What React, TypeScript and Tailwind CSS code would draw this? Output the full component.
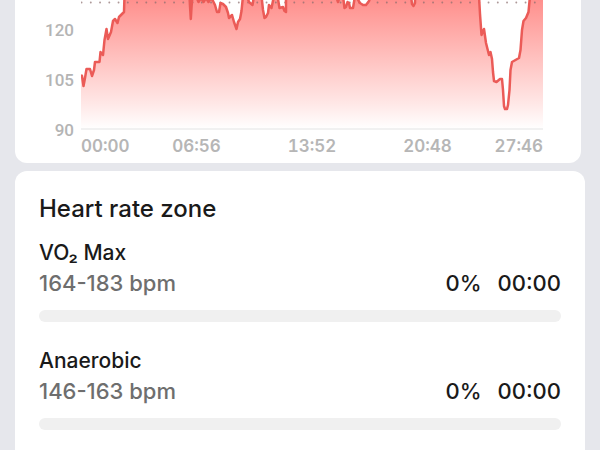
import React from "react";

const yTicks = ["120", "105", "90"];

const zones = [
  { id: "vo2", name: "VO₂ Max", range: "164-183 bpm", percent: 0, time: "00:00" },
  { id: "anaerobic", name: "Anaerobic", range: "146-163 bpm", percent: 0, time: "00:00" },
];

// bpm samples, the peaks run off above the visible part
const line =
  "M81 75 L82 76 L83.5 86 L85 78 L86.5 69 L90 69 L92 76 L94 70 L95 62 L99.5 62 L100.5 52 L103 55 L104.5 40 L106.5 29 L108 39 L111 32 L113 21 L115 19 L117.5 23 L119 17 L124 12 L124.5 -4 " +
  "L189.5 -4 L190 6 L190.8 19 L191.6 6 L192.5 -4 L196 -4 L198.5 2 L201 -2 L203.5 2 L206 -2 L208.5 2 L211 -2 L213 1 L215 5 L217 12 L219 12 L220.5 3 L223 4 L226 7 L228 13 L229 18 L232 15 L234 22 L236.5 29 L238 22 L240 19 L241.5 11 L243 -4 " +
  "L247 -4 L249 2 L252.5 5 L254 -4 L261.5 -4 L263 10 L264.5 18 L266 17 L268 13 L269 5 L271.5 8 L274 -4 L277.5 -4 L279.5 8 L283 7 L284.5 11 L286 12 L286 -4 " +
  "L336 -4 L338 2 L340 -4 L343 -4 L344.5 8 L346 7 L347.5 2 L349 3 L350 8 L353 8 L355 -4 L357 -2 L360 3 L363 5 L366 5 L369 1 L371 -4 L411 -4 L412 4 L413.5 6 L415 3 L415 -4 " +
  "L479 -4 L480 14 L481.5 35 L484 29 L486 43 L488 51 L489 55 L490.5 52 L492 59 L493 72 L494 81 L496.5 82 L500 79 L502 79 L503 90 L504 106 L505 109 L507 109 L508 105 L509.5 90 L510.5 70 L512 62 L519 58 L520.5 50 L522 30 L523.5 21 L526 18 L528.5 12 L530 -4 L543 -4";

function HeartRateChart() {
  return (
    <section className="mr-1 rounded-b-xl bg-white pr-[38px] pb-1.5 pl-6">
      <div className="flex h-[130px]">
        <div className="flex w-[42px] shrink-0 flex-col gap-[26px] pt-[18px] pr-[7px] text-right font-[Roboto,sans-serif] text-[17px] leading-6 font-medium text-[#b4b4b4]">
          {yTicks.map((tick) => (
            <span key={tick}>{tick}</span>
          ))}
        </div>
        <svg
          className="block h-full min-w-0 flex-1"
          viewBox="81 0 462 130"
          preserveAspectRatio="none"
          role="img"
          aria-label="Heart rate"
        >
          <defs>
            <linearGradient id="hr-fill" gradientUnits="userSpaceOnUse" x1="0" y1="0" x2="0" y2="129">
              <stop offset="0" stopColor="#ff908d" />
              <stop offset="0.45" stopColor="#ffc1bf" />
              <stop offset="0.8" stopColor="#ffe7e6" />
              <stop offset="1" stopColor="#ffffff" />
            </linearGradient>
          </defs>
          <path d={`${line} L543 129 L81 129 Z`} fill="url(#hr-fill)" />
          <path d="M81 129 H543" stroke="#f1f1f1" strokeWidth="2" />
          <path
            d="M81.5 2.5 H543"
            stroke="#8a6c6c"
            strokeOpacity="0.7"
            strokeWidth="1.8"
            strokeLinecap="round"
            strokeDasharray="0.1 9.15"
          />
          <path
            d={line}
            fill="none"
            stroke="#eb5b57"
            strokeWidth="2.5"
            strokeLinejoin="round"
            vectorEffect="non-scaling-stroke"
          />
        </svg>
      </div>
      <div className="ml-[42px] grid grid-cols-8 pt-1.5 text-[17px] leading-[21px] font-semibold text-[#b6b6b6] tabular-nums">
        <span>00:00</span>
        <span className="col-span-2 text-center">06:56</span>
        <span className="col-span-2 text-center">13:52</span>
        <span className="col-span-2 text-center">20:48</span>
        <span className="flex justify-end">27:46</span>
      </div>
    </section>
  );
}

export default function App() {
  return (
    <main className="h-screen overflow-hidden bg-[#e6e7ec] px-[15px] font-[Inter,sans-serif] text-[#1a1a1a]">
      <HeartRateChart />
      <section className="mt-2 min-h-screen rounded-t-xl bg-white px-6 pt-[22px]">
        <h2 className="text-2xl leading-8 font-medium">Heart rate zone</h2>
        <ul className="mt-[13px] flex flex-col gap-6">
          {zones.map((zone) => (
            <li key={zone.id}>
              <h3 className="text-[21px] leading-[30px] font-medium">{zone.name}</h3>
              <div className="flex items-center text-[22px] leading-[31px] font-medium">
                <p className="text-[#6e6e6e]">{zone.range}</p>
                <p className="ml-auto">{zone.percent}%</p>
                <p className="ml-4">{zone.time}</p>
              </div>
              <div
                className="mt-[11px] h-3 overflow-hidden rounded-full bg-[#f0f0f0]"
                role="progressbar"
                aria-label={zone.name}
                aria-valuenow={zone.percent}
              >
                <div className="h-full bg-[#eb5b57]" style={{ width: `${zone.percent}%` }} />
              </div>
            </li>
          ))}
        </ul>
      </section>
    </main>
  );
}
